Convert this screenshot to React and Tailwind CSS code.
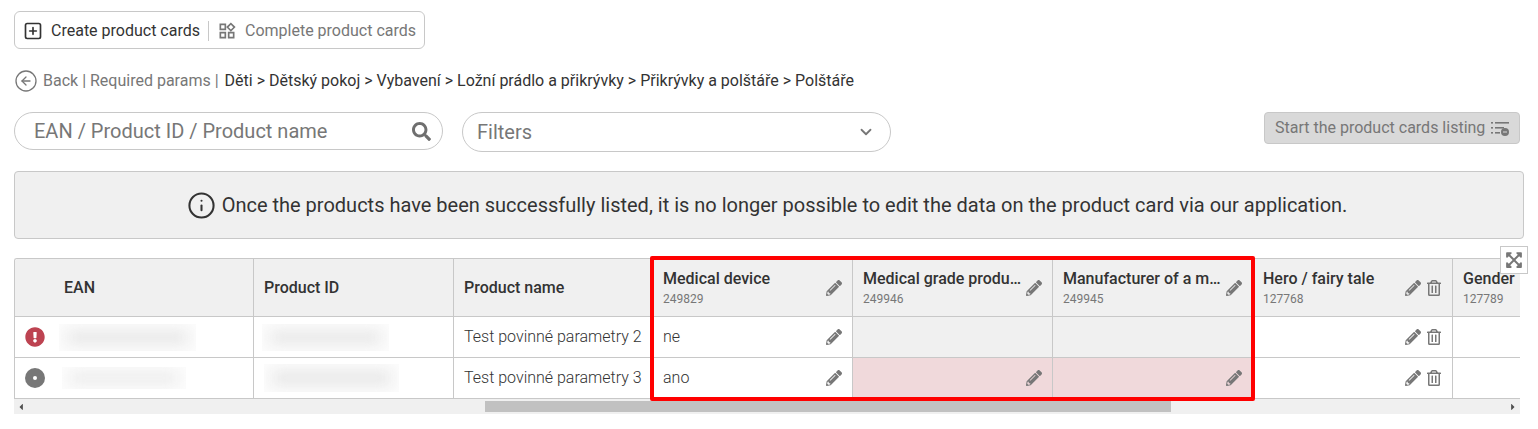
import React from 'react';
import { SquarePlus, CircleArrowLeft, ChevronDown, Info } from 'lucide-react';
import { FaPencilAlt, FaRegTrashAlt, FaExpandArrowsAlt, FaSearch, FaExclamationCircle, FaCaretLeft, FaCaretRight } from 'react-icons/fa';
import { MdOutlineWidgets } from 'react-icons/md';

const columns = [
  { title: 'Medical device', code: '249829' },
  { title: 'Medical grade product', code: '249946' },
  { title: 'Manufacturer of a medical device', code: '249945' },
  { title: 'Hero / fairy tale', code: '127768', trash: true },
];

function Actions({ trash }) {
  return (
    <div className="flex items-center gap-[6px] text-[#777] shrink-0">
      <FaPencilAlt className="w-4 h-4" />
      {trash && <FaRegTrashAlt className="w-[14px] h-4" />}
    </div>
  );
}

function Blurred({ boxClass }) {
  return (
    <div className={`overflow-hidden bg-[#fcfcfc] py-[6px] px-[8px] ${boxClass}`}>
      <div className="h-full w-full bg-[#e9e9e9] blur-[7px]" />
    </div>
  );
}

function HeadCell({ children, className = 'w-[200px]' }) {
  return <div className={`shrink-0 h-full border-r border-[#c8c8c8] flex items-center pl-[10px] font-medium text-[#333] ${className}`}>{children}</div>;
}

function DataCell({ value, bg, trash, noEdit }) {
  return (
    <div className={`w-[200px] shrink-0 h-full border-r border-[#c8c8c8] flex items-center justify-between pl-[10px] ${trash ? 'pr-[11px]' : 'pr-[10px]'} ${bg}`}>
      <span>{value}</span>
      {!noEdit && <Actions trash={trash} />}
    </div>
  );
}

export default function App() {
  return (
    <div className="relative h-[429px] w-[1538px] overflow-hidden bg-white px-[14px] pt-[11px] text-[16px] text-[#333] font-['Roboto',sans-serif]">
      <div className="flex h-[38px] w-[411px] items-center rounded-[6px] border border-[#c8c8c8] pl-[8px] pt-[1px]">
        <SquarePlus className="h-[20px] w-[20px] text-[#333]" strokeWidth={2} />
        <span className="ml-[8px]">Create product cards</span>
        <span className="mx-[8px] h-[20px] w-px bg-[#c8c8c8]" />
        <MdOutlineWidgets className="h-[20px] w-[20px] text-[#777]" />
        <span className="ml-[8px] text-[#777]">Complete product cards</span>
      </div>

      <div className="mt-[20px] flex h-[24px] items-center">
        <CircleArrowLeft className="h-[24px] w-[24px] text-[#777]" strokeWidth={1.3} />
        <span className="ml-[5px] text-[#777]">Back | Required params |</span>
        <span className="ml-[6px]">Děti &gt; Dětský pokoj &gt; Vybavení &gt; Ložní prádlo a přikrývky &gt; Přikrývky a polštáře &gt; Polštáře</span>
      </div>

      <div className="mt-[19px] flex h-[40px] items-start">
        <div className="flex h-[38px] w-[429px] items-center justify-between rounded-full border border-[#c8c8c8] pl-[19px] pr-[11px] text-[20px] text-[#777]">
          <span>EAN / Product ID / Product name</span>
          <FaSearch className="h-[19px] w-[19px] text-[#6f6f6f]" />
        </div>
        <div className="ml-[19px] flex h-[40px] w-[429px] items-center justify-between rounded-full border border-[#c8c8c8] pl-[14px] pr-[15px] text-[20px] text-[#777]">
          <span>Filters</span>
          <ChevronDown className="h-[18px] w-[18px]" strokeWidth={2.4} />
        </div>
        <div className="ml-auto mr-[4px] flex h-[32px] w-[256px] items-center justify-between rounded-[4px] border border-[#c8c8c8] bg-[#d9d9d9] pl-[10px] pr-[10px] text-[#777]">
          <span>Start the product cards listing</span>
          <svg viewBox="0 0 18 16" className="h-[16px] w-[18px]">
            <g fill="#777">
              <rect x="0" y="2" width="2" height="1.6" />
              <rect x="4" y="2" width="14" height="1.6" />
              <rect x="0" y="7" width="2" height="1.6" />
              <rect x="4" y="7" width="9" height="1.6" />
              <rect x="0" y="12" width="2" height="1.6" />
              <rect x="4" y="12" width="5" height="1.6" />
              <circle cx="14" cy="12" r="4" />
            </g>
            <rect x="12" y="11.5" width="4" height="1" fill="#d9d9d9" />
          </svg>
        </div>
      </div>

      <div className="mt-[19px] flex h-[68px] w-[1510px] items-center justify-center rounded-[4px] border border-[#c8c8c8] bg-[#f0f0f0] pr-[4px] text-[20px]">
        <Info className="mr-[6px] h-[29px] w-[29px]" strokeWidth={1.7} />
        <span>Once the products have been successfully listed, it is no longer possible to edit the data on the product card via our application.</span>
      </div>

      <div className="mt-[19px] w-[1506px] overflow-hidden rounded-tl-[3px] border-l border-t border-[#c8c8c8]">
        <div className="flex h-[58px] border-b border-[#c8c8c8] bg-[#f0f0f0]">
          <HeadCell className="w-[239px] pl-[49px]">EAN</HeadCell>
          <HeadCell>Product ID</HeadCell>
          <HeadCell className="w-[199px]">Product name</HeadCell>
          {columns.map(col => (
            <HeadCell key={col.code} className={`w-[200px] justify-between ${col.trash ? 'pr-[11px]' : 'pr-[10px]'}`}>
              <div className="min-w-0 flex-1">
                <div className="truncate pr-[1px] leading-[20px]">{col.title}</div>
                <div className="mt-[2px] text-[12px] leading-[16px] font-normal text-[#777]">{col.code}</div>
              </div>
              <div className="ml-[3px]"><Actions trash={col.trash} /></div>
            </HeadCell>
          ))}
          <HeadCell>
            <div className="min-w-0 flex-1">
              <div className="leading-[20px]">Gender</div>
              <div className="mt-[2px] text-[12px] leading-[16px] font-normal text-[#777]">127789</div>
            </div>
          </HeadCell>
        </div>

        <div className="flex h-[41px] border-b border-[#c8c8c8] font-light text-[#333]">
          <div className="w-[239px] shrink-0 h-full border-r border-[#c8c8c8] flex items-center pl-[10px]">
            <FaExclamationCircle className="h-[20px] w-[20px] text-[#bd4351]" />
            <Blurred boxClass="ml-[14px] h-[27px] w-[137px]" />
          </div>
          <div className="w-[200px] shrink-0 h-full border-r border-[#c8c8c8] flex items-center pl-[8px]">
            <Blurred boxClass="h-[27px] w-[127px]" />
          </div>
          <div className="w-[199px] shrink-0 h-full border-r border-[#c8c8c8] flex items-center pl-[10px]">Test povinné parametry 2</div>
          <DataCell value="ne" bg="bg-white" />
          <DataCell bg="bg-[#f0f0f0]" noEdit />
          <DataCell bg="bg-[#f0f0f0]" noEdit />
          <DataCell bg="bg-white" trash />
          <div className="w-[200px] shrink-0 h-full border-r border-[#c8c8c8]" />
        </div>

        <div className="flex h-[41px] border-b border-[#c8c8c8] font-light text-[#333]">
          <div className="w-[239px] shrink-0 h-full border-r border-[#c8c8c8] flex items-center pl-[10px]">
            <svg viewBox="0 0 20 20" className="h-[20px] w-[20px]">
              <circle cx="10" cy="10" r="10" fill="#777" />
              <circle cx="10" cy="10" r="2" fill="#fff" />
            </svg>
            <Blurred boxClass="ml-[17px] h-[22px] w-[124px]" />
          </div>
          <div className="w-[200px] shrink-0 h-full border-r border-[#c8c8c8] flex items-center pl-[10px]">
            <Blurred boxClass="h-[28px] w-[135px]" />
          </div>
          <div className="w-[199px] shrink-0 h-full border-r border-[#c8c8c8] flex items-center pl-[10px]">Test povinné parametry 3</div>
          <DataCell value="ano" bg="bg-white" />
          <DataCell bg="bg-[#f0d9db]" />
          <DataCell bg="bg-[#f0d9db]" />
          <DataCell bg="bg-white" trash />
          <div className="w-[200px] shrink-0 h-full border-r border-[#c8c8c8]" />
        </div>
      </div>

      <div className="flex h-[15px] w-[1506px] items-center justify-between bg-[#f0f0f0] text-[#505050]">
        <FaCaretLeft className="h-[10px] w-[10px] ml-[2px]" />
        <FaCaretRight className="h-[10px] w-[10px] mr-[2px]" />
      </div>
      <div className="absolute left-[485px] top-[401px] h-[11px] w-[686px] bg-[#c1c1c1]" />

      <div className="absolute left-[650px] top-[256px] h-[145px] w-[605px] rounded-[2px] border-[4px] border-[#ff0000]" />

      <div className="absolute left-[1500px] top-[246px] flex h-[28px] w-[28px] items-center justify-center border border-[#c8c8c8] bg-white text-[#777]">
        <FaExpandArrowsAlt className="h-[18px] w-[18px]" />
      </div>
    </div>
  );
}
